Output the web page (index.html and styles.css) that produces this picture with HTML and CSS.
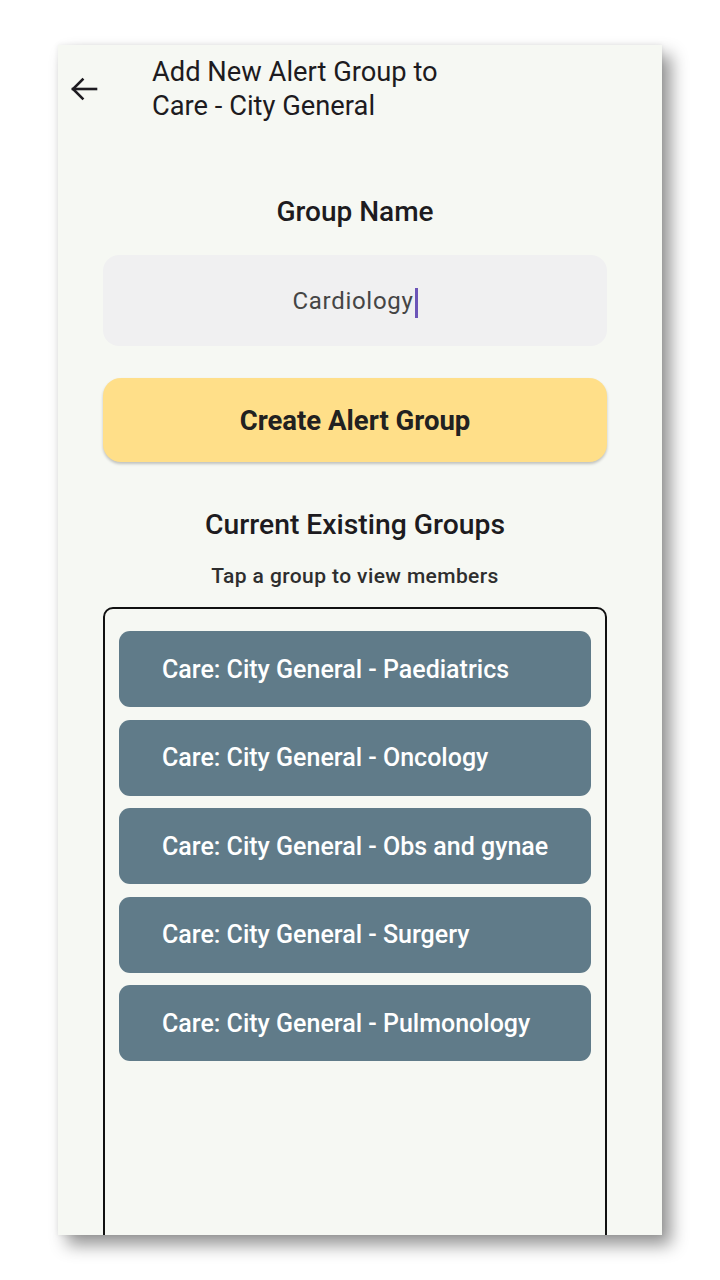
FILE: index.html
```html
<!DOCTYPE html>
<html lang="en">
<head>
<meta charset="utf-8">
<title>Add New Alert Group</title>
<link rel="stylesheet" href="styles.css">
</head>
<body>
<div class="frame">
  <header class="appbar">
    <button class="back" aria-label="Back">
      <svg width="28" height="24" viewBox="0 0 28 24" fill="none" stroke="#1d1b20" stroke-width="2.6" stroke-linecap="square">
        <path d="M3 12H26"/>
        <path d="M12.5 2.5L3 12l9.5 9.5"/>
      </svg>
    </button>
    <h1 class="title">Add New Alert Group to<br>Care - City General</h1>
  </header>
  <main class="content">
    <h2 class="label">Group Name</h2>
    <div class="input"><span class="value">Cardiology</span><span class="caret"></span></div>
    <button class="create">Create Alert Group</button>
    <h2 class="section">Current Existing Groups</h2>
    <p class="hint">Tap a group to view members</p>
    <div class="list">
      <div class="item">Care: City General - Paediatrics</div>
      <div class="item">Care: City General - Oncology</div>
      <div class="item">Care: City General - Obs and gynae</div>
      <div class="item">Care: City General - Surgery</div>
      <div class="item">Care: City General - Pulmonology</div>
    </div>
  </main>
</div>
</body>
</html>
```

FILE: styles.css
```css
* { box-sizing: border-box; }
html, body {
  margin: 0;
  padding: 0;
  background: #ffffff;
  width: 720px;
  height: 1280px;
  overflow: hidden;
  font-family: Roboto, "Noto Sans", "Liberation Sans", sans-serif;
}
body { padding: 45px 0 0 58px; }

.frame {
  width: 604px;
  height: 1190px;
  background: #f6f8f3;
  overflow: hidden;
  box-shadow: 9px 10px 16px rgba(0, 0, 0, 0.42), 0 0 5px rgba(0, 0, 0, 0.08);
  display: flex;
  flex-direction: column;
}

.appbar {
  display: flex;
  align-items: center;
  padding: 10px 0 0 12px;
  height: 78px;
}
.back {
  border: 0;
  background: none;
  padding: 0;
  width: 28px;
  height: 24px;
  display: flex;
  margin-right: 54px;
}
.title {
  margin: 0;
  font-size: 27.3px;
  line-height: 34px;
  font-weight: 400;
  color: #1d1b20;
}

.content {
  display: flex;
  flex-direction: column;
  padding: 0 55px 0 45px;
  flex: 1;
}
.label {
  margin: 73px 0 0;
  text-align: center;
  font-size: 28px;
  line-height: 32px;
  font-weight: 500;
  color: #1d1b20;
}
.input {
  margin-top: 27px;
  height: 91px;
  border-radius: 16px;
  background: #f0f0f1;
  display: flex;
  align-items: center;
  justify-content: center;
  font-size: 24px;
  letter-spacing: 0.7px;
  color: #454545;
}
.caret {
  width: 3px;
  height: 30px;
  background: #6c55b8;
  margin-left: 1px;
  margin-top: 4px;
}
.create {
  margin-top: 32px;
  height: 84px;
  border: 0;
  border-radius: 18px;
  background: #ffdf89;
  box-shadow: 0 2px 3px rgba(0, 0, 0, 0.22);
  font-family: inherit;
  font-size: 27.5px;
  font-weight: 700;
  color: #212121;
}
.section {
  margin: 47px 0 0;
  text-align: center;
  font-size: 28.3px;
  line-height: 32px;
  font-weight: 500;
  color: #1d1b20;
}
.hint {
  margin: 22px 0 0;
  text-align: center;
  font-size: 21px;
  line-height: 26px;
  letter-spacing: 0.4px;
  font-weight: 500;
  color: #2e2e2e;
}
.list {
  margin-top: 18px;
  height: 700px;
  flex-shrink: 0;
  border: 2px solid #111;
  border-radius: 10px;
  padding: 22px 14px;
  display: flex;
  flex-direction: column;
  gap: 12.5px;
}
.item {
  height: 76px;
  flex-shrink: 0;
  border-radius: 11px;
  background: #607b89;
  color: #ffffff;
  display: flex;
  align-items: center;
  padding-left: 43px;
  font-size: 25px;
  font-weight: 500;
}
```
